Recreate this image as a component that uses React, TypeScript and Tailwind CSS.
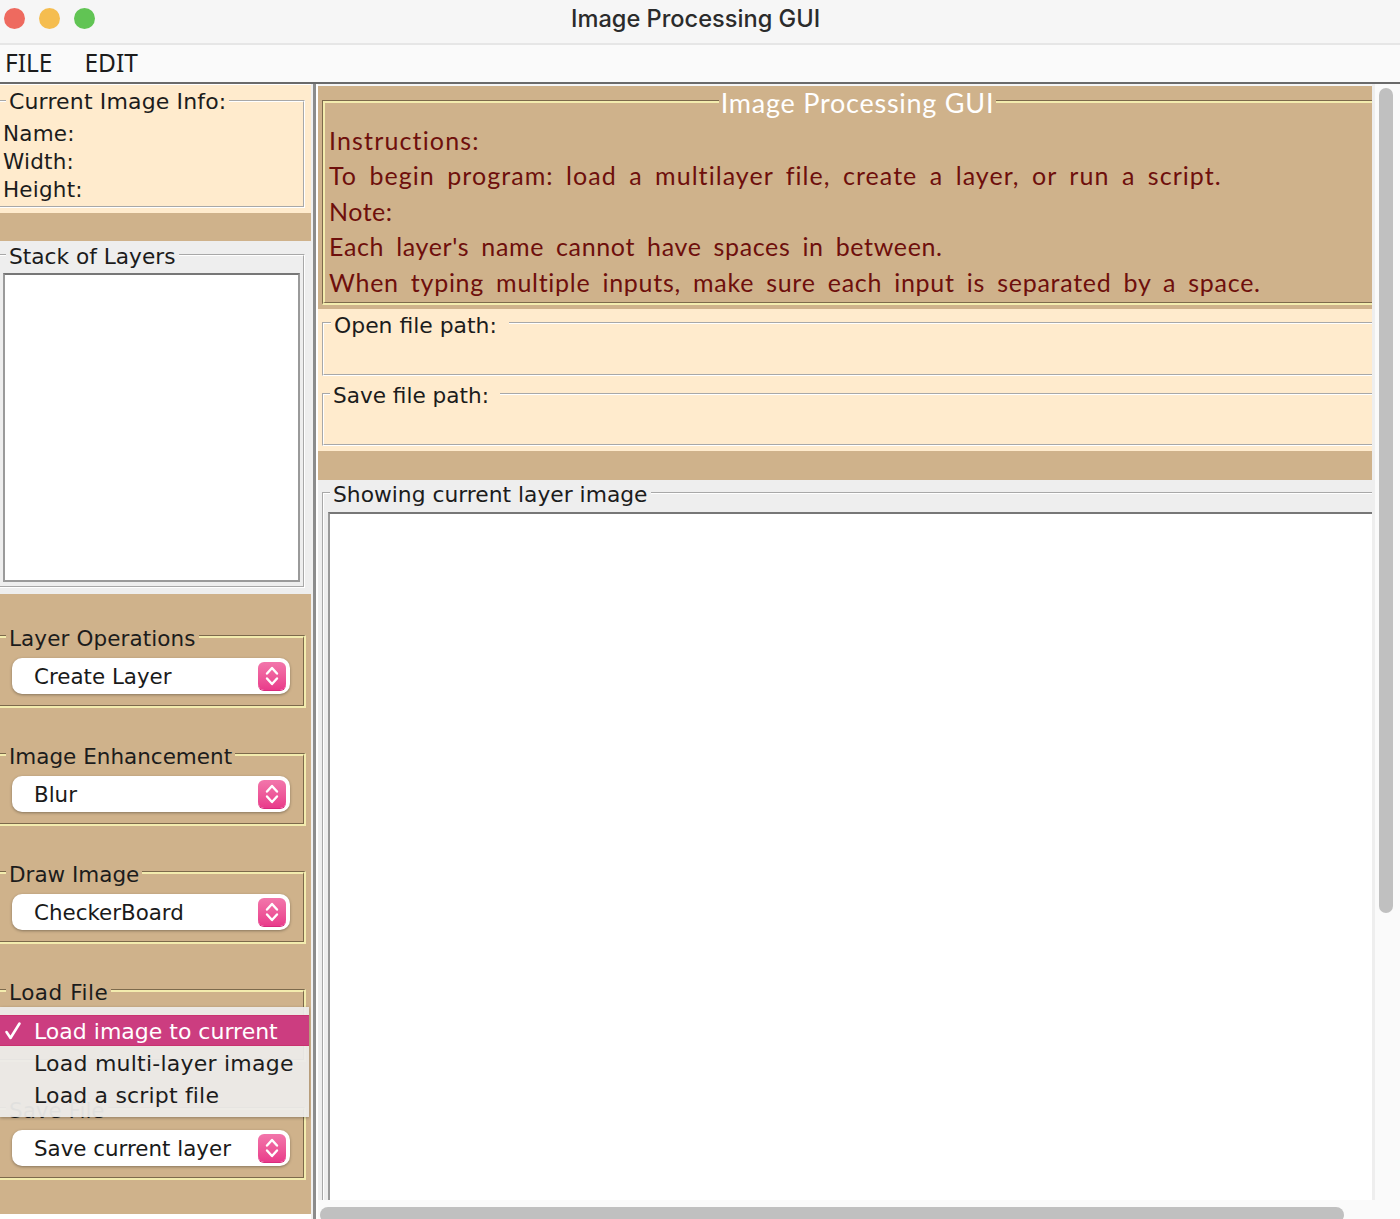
import React from "react";

const ui = "font-['DejaVu_Sans',sans-serif]";
const comic = "font-['Lato',sans-serif]";

function Stepper() {
  return (
    <div className="flex h-[28px] w-[28px] items-center justify-center rounded-[6px] bg-gradient-to-b from-[#f276ab] to-[#e93a8b] shadow-[0_1px_0_#d92a7c]">
      <svg width="16" height="22" viewBox="0 0 16 22" fill="none" stroke="#ffffff" strokeWidth="2.4" strokeLinecap="round" strokeLinejoin="round">
        <path d="M3 8.5 L8 3 L13 8.5" />
        <path d="M3 13.5 L8 19 L13 13.5" />
      </svg>
    </div>
  );
}

function Group({ title, value, first, titleClass = "" }: { title: string; value?: string; first?: boolean; titleClass?: string }) {
  return (
    <fieldset className={`-ml-[3px] h-[85px] w-[309px] border-t border-l border-r-2 border-b-2 border-t-[#7d6a4c] border-l-[#7d6a4c] border-r-[#f3ecae] border-b-[#f3ecae] ${first ? "" : "mt-[33px]"}`}>
      <legend className={`relative z-10 ml-[8px] h-[25px] bg-[#cfb28b] px-[3px] text-[21.5px] leading-[31px] text-[#1c1c1c] ${ui} ${titleClass}`}>{title}</legend>
      <div className="-mt-[12px] h-[70px] border-t-2 border-l-2 border-r border-b border-t-[#f3ecae] border-l-[#f3ecae] border-r-[#7d6a4c] border-b-[#7d6a4c] pl-[12px] pt-[20px]">
        {value && (
          <div className="flex h-[36px] w-[278px] items-center justify-between rounded-[10px] bg-white pl-[22px] pr-[4px] shadow-[0_1px_3px_rgba(0,0,0,0.35)]">
            <span className={`pt-[2px] text-[21.4px] text-[#1a1a1a] ${ui}`}>{value}</span>
            <Stepper />
          </div>
        )}
      </div>
    </fieldset>
  );
}

function Plain({ title, className, legendClass, children }: { title: string; className: string; legendClass: string; children?: React.ReactNode }) {
  return (
    <fieldset className={`border border-t-[#a8a8a8] border-l-[#a8a8a8] border-r-white border-b-white ${className}`}>
      <legend className={`relative z-10 h-[25px] pl-[3px] text-[#1c1c1c] ${ui} ${legendClass}`}>{title}</legend>
      {children}
    </fieldset>
  );
}

export default function App() {
  return (
    <div className={`flex h-[1219px] w-[1400px] flex-col overflow-hidden bg-[#f5f5f5] ${ui}`}>
      {/* title bar */}
      <div className="flex h-[45px] shrink-0 items-center border-b-2 border-[#e6e6e6] bg-[#f6f6f6]">
        <div className="flex w-[540px] items-center gap-[14px] pl-[4px] -mt-[6px]">
          <span className="h-[21px] w-[21px] rounded-full bg-[#ee6a5f]" />
          <span className="h-[21px] w-[21px] rounded-full bg-[#f5bd4f]" />
          <span className="h-[21px] w-[21px] rounded-full bg-[#61c454]" />
        </div>
        <div className="flex-1 -mt-[6px] pl-[31px] font-['Inter',sans-serif] text-[23.6px] font-medium text-[#2b2b2b]">Image Processing GUI</div>
      </div>
      {/* menu bar */}
      <div className="flex h-[39px] shrink-0 items-center gap-[32px] border-b-[2px] border-[#6a6a6a] bg-[#fafafa] pl-[5px] text-[24.5px] text-[#1c1c1c] font-['Noto_Sans',sans-serif]">
        <span>FILE</span>
        <span>EDIT</span>
      </div>

      <div className="flex min-h-0 flex-1">
        {/* left column */}
        <div className="relative flex w-[311px] shrink-0 flex-col overflow-hidden bg-white pt-[1px]">
          <div className="h-[128px] shrink-0 bg-[#ffebcd] pt-[3px]">
            <Plain title="Current Image Info:" className="-ml-[3px] h-[120px] w-[308px]" legendClass="ml-[8px] bg-[#ffebcd] pr-[3px] text-[22px] leading-[27px] tracking-[0.15px]">
              <div className="-mt-[12px] h-[106px] border border-t-white border-l-white border-r-[#a8a8a8] border-b-[#a8a8a8] pl-[4px] pt-[18px] text-[21.5px] leading-[28px] tracking-[0.2px] text-[#1c1c1c]">
                <div>Name:</div>
                <div>Width:</div>
                <div>Height:</div>
              </div>
            </Plain>
          </div>
          <div className="h-[28px] shrink-0 bg-[#cfb28b]" />
          <div className="h-[353px] shrink-0 bg-[#eeeeee] pt-[1px]">
            <Plain title="Stack of Layers" className="-ml-[3px] h-[346px] w-[308px]" legendClass="ml-[8px] bg-[#eeeeee] pr-[3px] text-[21.7px] leading-[29px]">
              <div className="-mt-[12px] h-[332px] border border-t-white border-l-white border-r-[#a8a8a8] border-b-[#a8a8a8] pl-[4px] pt-[17px]">
                <div className="h-[309px] w-[297px] border-2 border-[#9a9a9a] border-t-[#777777] bg-white" />
              </div>
            </Plain>
          </div>
          <div className="h-[620px] shrink-0 bg-[#cfb28b] pt-[29px]">
            <Group first title="Layer Operations" value="Create Layer" titleClass="tracking-[0.1px]" />
            <Group title="Image Enhancement" value="Blur" />
            <Group title="Draw Image" value="CheckerBoard" />
            <Group title="Load File" titleClass="tracking-[0.55px]" />
            <Group title="Save File" value="Save current layer" />
          </div>

          {/* open dropdown */}
          <div className="absolute left-0 top-[923px] z-20 h-[110px] w-[309px] bg-[#ecebe9]/95 pt-[8px] shadow-[0_1px_3px_rgba(0,0,0,0.3)]">
            <div className="flex h-[31px] items-center border-y border-[#c9326f] bg-[#cc3d80] pt-[1px] text-[22px] text-white">
              <span className="flex w-[34px] pl-[4px]">
                <svg width="18" height="20" viewBox="0 0 18 20" fill="none" stroke="#ffffff" strokeWidth="2.6" strokeLinecap="round" strokeLinejoin="round">
                  <path d="M2.5 11 L6.5 17 L15.5 2.5" />
                </svg>
              </span>
              <span>Load image to current</span>
            </div>
            <div className="flex h-[32px] items-center pl-[34px] pt-[2px] text-[22px] tracking-[0.23px] text-[#1c1c1c]">Load multi-layer image</div>
            <div className="flex h-[32px] items-center pl-[34px] pt-[2px] text-[22px] tracking-[0.17px] text-[#1c1c1c]">Load a script file</div>
          </div>
        </div>

        {/* splitter */}
        <div className="flex w-[7px] shrink-0 bg-[#f0f0f0]">
          <div className="ml-[2px] w-[3px] bg-[#8c8c8c]" />
          <div className="w-[2px] bg-white" />
        </div>

        {/* right column */}
        <div className="flex min-w-0 flex-1 flex-col">
          <div className="flex min-h-0 flex-1">
            <div className="w-[1054px] shrink-0 overflow-hidden pt-[2px]">
              <div className="h-[223px] bg-[#cfb28b] pt-[2px]">
                <fieldset className="ml-[4px] h-[217px] w-[1072px] border-t border-l border-r-2 border-b-2 border-t-[#7d6a4c] border-l-[#7d6a4c] border-r-[#f3ecae] border-b-[#f3ecae]">
                  <legend className={`relative z-10 mx-auto h-[25px] bg-[#cfb28b] px-[2px] text-[27px] leading-[29px] tracking-[0.75px] text-white ${comic}`}>Image Processing GUI</legend>
                  <div className={`-mt-[12px] h-[202px] border-t-2 border-l-2 border-r border-b border-t-[#f3ecae] border-l-[#f3ecae] border-r-[#7d6a4c] border-b-[#7d6a4c] pl-[4px] pt-[20px] text-[25px] leading-[35.4px] [word-spacing:5px] text-[#6e0f0c] ${comic}`}>
                    <div className="tracking-[1.15px]">Instructions:</div>
                    <div className="tracking-[1.05px]">To begin program: load a multilayer file, create a layer, or run a script.</div>
                    <div className="tracking-[0.5px]">Note:</div>
                    <div className="tracking-[0.64px]">Each layer's name cannot have spaces in between.</div>
                    <div className="tracking-[0.72px]">When typing multiple inputs, make sure each input is separated by a space.</div>
                  </div>
                </fieldset>
              </div>
              <div className="h-[142px] bg-[#ffebcd] pt-[1px]">
                <Plain title="Open file path:" className="ml-[4px] h-[66px] w-[1072px]" legendClass="ml-[8px] bg-[#ffebcd] pr-[12px] text-[21.9px] leading-[31px]">
                  <div className="-mt-[12px] h-[52px] border-b border-l border-t border-b-[#a8a8a8] border-l-white border-t-white" />
                </Plain>
                <Plain title="Save file path:" className="ml-[4px] mt-[5px] h-[65px] w-[1072px]" legendClass="ml-[7px] bg-[#ffebcd] pr-[11px] text-[21.6px] leading-[29px]">
                  <div className="-mt-[12px] h-[51px] border-b border-l border-t border-b-[#a8a8a8] border-l-white border-t-white" />
                </Plain>
              </div>
              <div className="h-[29px] bg-[#cfb28b]" />
              <div className="h-[720px] overflow-hidden bg-[#eeeeee]">
                <Plain title="Showing current layer image" className="ml-[4px] h-[760px] w-[1072px]" legendClass="ml-[7px] bg-[#eeeeee] pr-[3px] text-[21.8px] leading-[29px]">
                  <div className="-mt-[12px] h-[746px] border-l border-t border-l-white border-t-white pl-[4px] pt-[18px]">
                    <div className="h-[720px] w-[1060px] border-l-2 border-t-2 border-l-[#9a9a9a] border-t-[#777777] bg-white" />
                  </div>
                </Plain>
              </div>
            </div>
            {/* vertical scrollbar */}
            <div className="flex-1 border-l-[3px] border-[#eeeeee] bg-[#fafafa] pl-[4px] pt-[4px]">
              <div className="h-[825px] w-[14px] rounded-full bg-[#c0c0c0]" />
            </div>
          </div>
          {/* horizontal scrollbar */}
          <div className="h-[19px] shrink-0 overflow-hidden bg-[#fafafa] pl-[2px] pt-[7px]">
            <div className="h-[16px] w-[1024px] rounded-full bg-[#c0c0c0]" />
          </div>
        </div>
      </div>
    </div>
  );
}
